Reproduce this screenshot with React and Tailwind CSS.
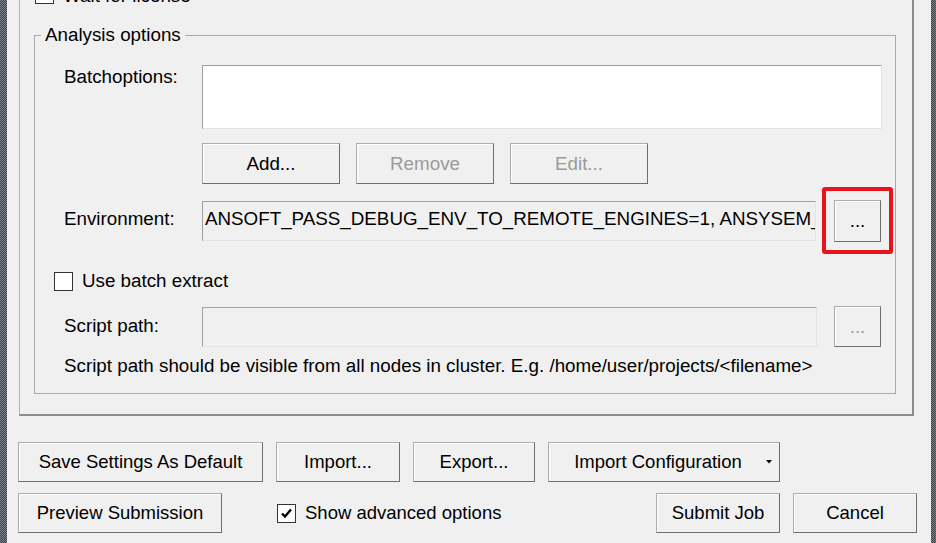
const strip =
  "bg-[repeating-conic-gradient(#3f444b_0_25%,#7c828a_0_50%)] bg-size-[2px_2px]";

function Check({ checked }) {
  return (
    <span className="flex h-[19px] w-[19px] shrink-0 items-center justify-center border border-[#333333] bg-white">
      {checked && (
        <svg width="13" height="13" viewBox="0 0 13 13">
          <path d="M2 6.5 L5 9.5 L11 2.5" fill="none" stroke="#000" strokeWidth="2.4" />
        </svg>
      )}
    </span>
  );
}

function Btn({ children, className = "", disabled }) {
  return (
    <button
      className={`flex shrink-0 items-center justify-center border border-[#adadad] border-r-[#6e6e6e] border-b-[#6e6e6e] bg-[#f0f0f0] shadow-[inset_1px_1px_0_#ffffff] ${
        disabled ? "text-[#9a9a9a]" : "text-black"
      } ${className}`}
    >
      {children}
    </button>
  );
}

const field =
  "border border-t-[#a0a0a0] border-l-[#a0a0a0] border-r-[#e3e3e3] border-b-[#e3e3e3]";

export default function App() {
  return (
    <div className="flex h-[543px] w-[936px] overflow-hidden bg-[#f0f0f0] font-['Liberation_Sans',Arial,sans-serif] text-[18.8px] leading-[20px] text-black">
      <div className={`w-[7px] shrink-0 ${strip}`} />

      <div className="flex w-[924px] shrink-0 flex-col">
        {/* outer frame */}
        <div className="ml-[12px] mt-[-30px] h-[446px] w-[895px] border-l border-b-2 border-r-2 border-l-[#b4b4b4] border-b-[#8c8c8c] border-r-[#8c8c8c] pt-[15px]">
          <div className="ml-[15px] flex h-[19px] items-center gap-[9px]">
            <Check />
            <span className="mt-[2px]">Wait for license</span>
          </div>

          <fieldset className="ml-[14px] mt-[21px] w-[862px] border border-[#a9a9a9] pb-[17px] pt-[20px]">
            <legend className="ml-[6px] px-[4px]">Analysis options</legend>

            <div className="flex items-start pl-[29px]">
              <span className="mt-[2px] w-[138px] shrink-0">Batchoptions:</span>
              <div className={`h-[64px] w-[680px] bg-white ${field}`} />
            </div>

            <div className="ml-[167px] mt-[14px] flex gap-[16px]">
              <Btn className="h-[41px] w-[138px]">Add...</Btn>
              <Btn className="h-[41px] w-[138px]" disabled>Remove</Btn>
              <Btn className="h-[41px] w-[138px]" disabled>Edit...</Btn>
            </div>

            <div className="mt-[3px] flex items-center pl-[29px]">
              <span className="mb-[4px] w-[138px] shrink-0">Environment:</span>
              <div className={`flex h-[40px] w-[614px] items-center overflow-hidden whitespace-nowrap bg-[#f0f0f0] pb-[4px] pl-[2px] ${field}`}>
                ANSOFT_PASS_DEBUG_ENV_TO_REMOTE_ENGINES=1, ANSYSEM_FEATURE_F539685_ENABLE=1
              </div>
              <div className="ml-[6px] rounded-[3px] border-4 border-[#e8141b] pb-[8px] pl-[8px] pr-[8px] pt-[9px]">
                <Btn className="h-[42px] w-[47px]">...</Btn>
              </div>
            </div>

            <div className="ml-[19px] mt-[17px] flex items-center gap-[9px]">
              <Check />
              <span>Use batch extract</span>
            </div>

            <div className="mt-[15px] flex items-center pl-[29px]">
              <span className="mb-[2px] w-[138px] shrink-0">Script path:</span>
              <div className={`h-[40px] w-[615px] bg-[#f0f0f0] ${field}`} />
              <Btn className="ml-[17px] h-[41px] w-[47px]" disabled>...</Btn>
            </div>

            <p className="ml-[29px] mt-[9px] whitespace-nowrap">
              Script path should be visible from all nodes in cluster. E.g. /home/user/projects/&lt;filename&gt;
            </p>
          </fieldset>
        </div>

        {/* bottom buttons */}
        <div className="ml-[11px] mt-[26px] flex gap-[13px] text-[18.5px]">
          <Btn className="h-[40px] w-[245px]">Save Settings As Default</Btn>
          <Btn className="h-[40px] w-[124px]">Import...</Btn>
          <Btn className="h-[40px] w-[122px]">Export...</Btn>
          <Btn className="relative h-[40px] w-[232px] pr-[12px]">
            Import Configuration
            <svg className="absolute right-[7px] top-[17px]" width="6" height="4" viewBox="0 0 6 4">
              <path d="M0 0 H6 L3 3.5 Z" fill="#000" />
            </svg>
          </Btn>
        </div>

        <div className="ml-[11px] mr-[14px] mt-[11px] flex items-center text-[18.5px]">
          <Btn className="h-[40px] w-[204px]">Preview Submission</Btn>
          <div className="ml-[55px] flex items-center gap-[9px]">
            <Check checked />
            <span>Show advanced options</span>
          </div>
          <div className="ml-auto flex gap-[13px]">
            <Btn className="h-[40px] w-[124px]">Submit Job</Btn>
            <Btn className="h-[40px] w-[124px]">Cancel</Btn>
          </div>
        </div>
      </div>

      <div className={`w-[5px] shrink-0 ${strip}`} />
    </div>
  );
}
